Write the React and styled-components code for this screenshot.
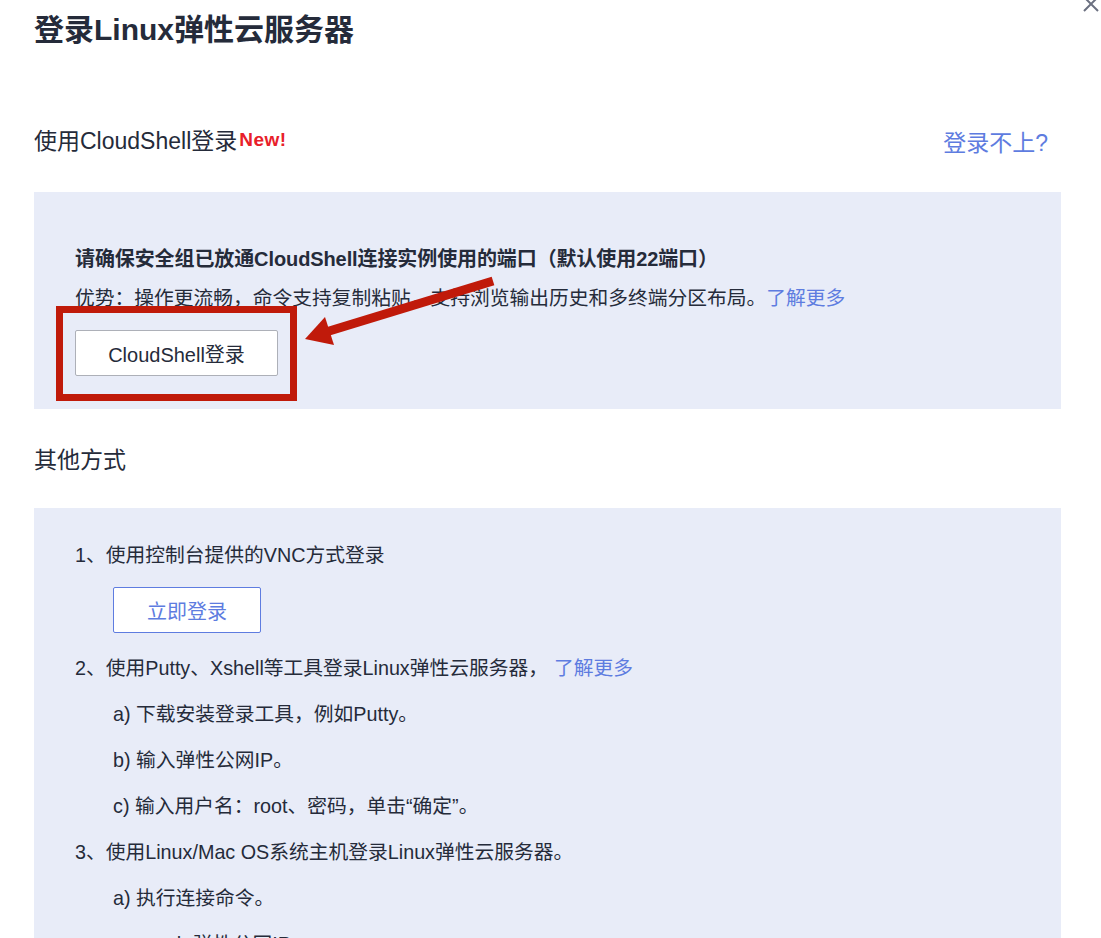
import React from "react";
import styled, { createGlobalStyle } from "styled-components";

const Global = createGlobalStyle`
  html, body { margin: 0; padding: 0; background: #fff; overflow: hidden; }
  body { font-family: "Liberation Sans", "Noto Sans CJK SC", sans-serif; color: #252b3a; }
`;

const Dialog = styled.div`
  position: relative;
  padding: 10px 40px 0 34px;
`;

const Title = styled.h1`
  margin: 0;
  font-size: 30px;
  line-height: 40px;
  font-weight: 700;
  color: #252b3a;
`;

const Close = styled.button`
  position: absolute;
  top: -5px;
  right: 1px;
  width: 18px;
  height: 18px;
  padding: 0;
  border: 0;
  background: none;
  display: flex;
`;

const SectionRow = styled.div`
  display: flex;
  justify-content: space-between;
  align-items: center;
  margin-top: ${(p) => p.$top}px;
  padding-right: 13px;
  height: 32px;
`;

const SectionTitle = styled.div`
  font-size: 23px;
  line-height: 32px;
  display: flex;
  align-items: center;
`;

const NewTag = styled.span`
  color: #e8202a;
  font-weight: 700;
  font-size: 19px;
  margin-left: 2px;
  margin-top: -3px;
  letter-spacing: 0.5px;
`;

const HelpLink = styled.a`
  color: #5e7ce0;
  font-size: 23px;
  text-decoration: none;
`;

const Panel = styled.div`
  position: relative;
  background: #e8ecf8;
  margin-top: ${(p) => p.$top}px;
  padding: ${(p) => p.$pad};
`;

const Strong = styled.div`
  font-size: 20px;
  line-height: 30px;
  font-weight: 700;
  letter-spacing: -0.1px;
`;

const Text = styled.div`
  font-size: 19.75px;
  line-height: 30px;
  margin-top: 9px;
`;

const Link = styled.a`
  color: #5e7ce0;
  text-decoration: none;
  margin-left: ${(p) => p.$gap || 0}px;
`;

const GhostButton = styled.button`
  display: block;
  box-sizing: border-box;
  width: ${(p) => p.$w}px;
  height: ${(p) => p.$h}px;
  margin: ${(p) => p.$m};
  background: #fff;
  border: 1px solid ${(p) => (p.$primary ? "#5e7ce0" : "#adb0b8")};
  border-radius: 2px;
  color: ${(p) => (p.$primary ? "#5e7ce0" : "#252b3a")};
  font-family: "Liberation Sans", "Noto Sans CJK SC", sans-serif;
  font-size: 20px;
  padding: 0;
`;

const StepLine = styled.div`
  font-size: 19.75px;
  line-height: 46px;
  padding-left: ${(p) => p.$indent || 0}px;
  white-space: nowrap;
`;

const FirstLine = styled.div`
  font-size: 19.75px;
  line-height: 30px;
`;

const Overlay = styled.svg`
  position: absolute;
  left: 0;
  top: 0;
  width: 100%;
  height: 100%;
  pointer-events: none;
  overflow: visible;
`;

export default function App() {
  return (
    <>
      <Global />
      <Dialog>
        <Title>登录Linux弹性云服务器</Title>
        <Close aria-label="close">
          <svg width="18" height="18" viewBox="0 0 18 18">
            <path d="M2 2 L16 16 M16 2 L2 16" stroke="#6b7080" strokeWidth="2" fill="none" />
          </svg>
        </Close>

        <SectionRow $top={75}>
          <SectionTitle>
            使用CloudShell登录<NewTag>New!</NewTag>
          </SectionTitle>
          <HelpLink href="#">登录不上?</HelpLink>
        </SectionRow>

        <Panel $top={35} $pad="52px 41px 33px">
          <Strong>请确保安全组已放通CloudShell连接实例使用的端口（默认使用22端口）</Strong>
          <Text>
            优势：操作更流畅，命令支持复制粘贴，支持浏览输出历史和多终端分区布局。<Link href="#">了解更多</Link>
          </Text>
          <GhostButton $w={203} $h={46} $m="17px 0 0">CloudShell登录</GhostButton>
          <Overlay viewBox="0 0 1027 217" preserveAspectRatio="none">
            <rect x="25.5" y="117.5" width="234" height="88" fill="none" stroke="#c01a0a" strokeWidth="7" />
            <path d="M459 89 L292 140" stroke="#c01a0a" strokeWidth="9" fill="none" />
            <path d="M271 147 L291 125 L300 153 Z" fill="#c01a0a" />
          </Overlay>
        </Panel>

        <SectionRow $top={35}>
          <SectionTitle>其他方式</SectionTitle>
        </SectionRow>

        <Panel $top={32} $pad="32px 41px 40px">
          <FirstLine>1、使用控制台提供的VNC方式登录</FirstLine>
          <GhostButton $primary $w={148} $h={46} $m="17px 0 12px 38px">立即登录</GhostButton>
          <StepLine>
            2、使用Putty、Xshell等工具登录Linux弹性云服务器，<Link href="#" $gap={6}>了解更多</Link>
          </StepLine>
          <StepLine $indent={38}>a) 下载安装登录工具，例如Putty。</StepLine>
          <StepLine $indent={38}>b) 输入弹性公网IP。</StepLine>
          <StepLine $indent={38}>c) 输入用户名：root、密码，单击“确定”。</StepLine>
          <StepLine>3、使用Linux/Mac OS系统主机登录Linux弹性云服务器。</StepLine>
          <StepLine $indent={38}>a) 执行连接命令。</StepLine>
          <StepLine $indent={82}>ssh 弹性公网IP</StepLine>
        </Panel>
      </Dialog>
    </>
  );
}
